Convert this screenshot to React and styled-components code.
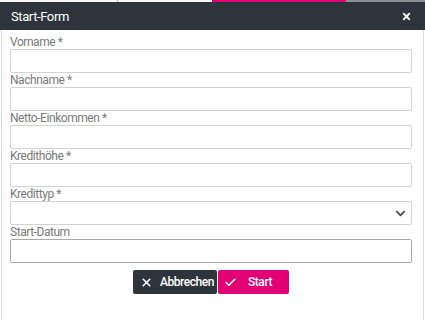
import React from "react";
import styled, { createGlobalStyle } from "styled-components";
import { FaTimes, FaChevronDown } from "react-icons/fa";
import { X, Check } from "lucide-react";

const FONT = `Roboto, "Noto Sans", sans-serif`;

const GlobalStyle = createGlobalStyle`
  html, body {
    margin: 0;
    padding: 0;
    background: #ffffff;
  }
  body {
    font-family: ${FONT};
  }
  * {
    box-sizing: border-box;
  }
`;

const TabStrip = styled.div`
  display: flex;
  height: 2px;
  background: #f4f4f4;
`;

const TabSegment = styled.div`
  width: ${(p) => p.$width}px;
  flex: ${(p) => (p.$grow ? 1 : "none")};
  background: ${(p) => p.$color};
  border-right: ${(p) => (p.$divider ? "1px solid #b8b8b8" : "none")};
`;

const Header = styled.div`
  display: flex;
  align-items: center;
  justify-content: space-between;
  height: 28px;
  padding: 0 13px 0 11px;
  background: #2d343c;
  color: #ffffff;
`;

const Title = styled.h1`
  margin: 0;
  font-family: ${FONT};
  font-size: 13px;
  font-weight: 400;
  letter-spacing: -0.4px;
`;

const CloseButton = styled.div`
  display: flex;
  align-items: center;
  cursor: pointer;
  user-select: none;
  font-size: 11px;
`;

const Body = styled.div`
  margin: 0 1px;
  height: 290px;
  padding: 5px 11px 0 8px;
  border-left: 1px solid #dcdcdc;
  border-right: 1px solid #dcdcdc;
`;

const Field = styled.div`
  display: flex;
  flex-direction: column;
`;

const Label = styled.label`
  height: 14px;
  line-height: 14px;
  font-family: ${FONT};
  font-size: 12px;
  letter-spacing: -0.45px;
  color: #7a7a7a;
`;

const StyledInput = styled.input`
  width: 100%;
  height: 24px;
  margin: 0;
  padding: 0 6px;
  border: 1px solid ${(p) => (p.$strong ? "#a9a9a9" : "#d2d2d2")};
  border-radius: 2px;
  background: #ffffff;
  font-family: ${FONT};
  font-size: 12px;
  outline: none;
`;

const SelectWrap = styled.div`
  position: relative;
  height: 24px;
`;

const StyledSelect = styled.select`
  width: 100%;
  height: 24px;
  margin: 0;
  padding: 0 6px;
  border: 1px solid #d2d2d2;
  border-radius: 2px;
  background: #ffffff;
  appearance: none;
  font-family: ${FONT};
  font-size: 12px;
  outline: none;
`;

const Chevron = styled.span`
  position: absolute;
  right: 6px;
  top: 7px;
  display: flex;
  color: #4a4f55;
  font-size: 11px;
  pointer-events: none;
`;

const Actions = styled.div`
  display: flex;
  justify-content: center;
  gap: 1px;
  margin-top: 7px;
`;

const ActionButton = styled.button`
  display: flex;
  align-items: center;
  width: ${(p) => p.$width}px;
  height: 24px;
  padding: 0 0 0 ${(p) => p.$pad}px;
  gap: ${(p) => p.$gap}px;
  border: none;
  border-radius: 2px;
  background: ${(p) => p.$bg};
  color: #ffffff;
  font-family: ${FONT};
  font-size: 12px;
  font-weight: 500;
  letter-spacing: -0.45px;
  cursor: pointer;
`;

const fields = [
  { label: "Vorname *" },
  { label: "Nachname *" },
  { label: "Netto-Einkommen *" },
  { label: "Kredithöhe *" },
  { label: "Kredittyp *", select: true },
  { label: "Start-Datum", strong: true },
];

const App = () => {
  return (
    <>
      <GlobalStyle />
      <TabStrip>
        <TabSegment $width={118} $color="#f6f6f6" $divider />
        <TabSegment $width={94} $color="#f6f6f6" />
        <TabSegment $width={134} $color="#e20074" />
        <TabSegment $grow $color="#8a8f94" />
      </TabStrip>
      <Header>
        <Title>Start-Form</Title>
        <CloseButton>
          <FaTimes />
        </CloseButton>
      </Header>
      <Body>
        {fields.map((f) => (
          <Field key={f.label}>
            <Label>{f.label}</Label>
            {f.select ? (
              <SelectWrap>
                <StyledSelect defaultValue="">
                  <option value="" />
                </StyledSelect>
                <Chevron>
                  <FaChevronDown />
                </Chevron>
              </SelectWrap>
            ) : (
              <StyledInput type="text" $strong={f.strong} />
            )}
          </Field>
        ))}
        <Actions>
          <ActionButton $width={84} $pad={7} $gap={7} $bg="#2d343c">
            <X size={13} strokeWidth={3} />
            Abbrechen
          </ActionButton>
          <ActionButton $width={71} $pad={6} $gap={11} $bg="#e20074">
            <Check size={13} strokeWidth={3} />
            Start
          </ActionButton>
        </Actions>
      </Body>
    </>
  );
};

export default App;
